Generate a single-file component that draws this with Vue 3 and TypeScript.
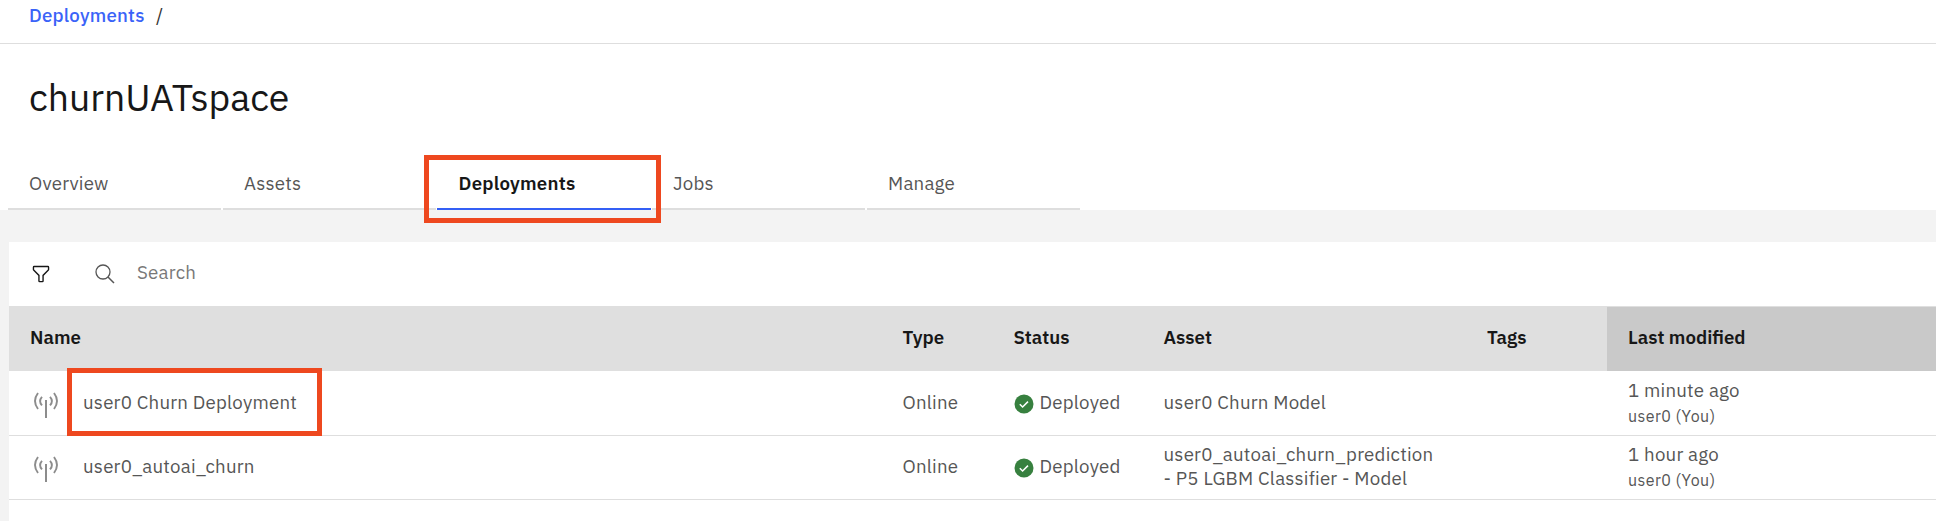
<script setup lang="ts">
interface Tab {
  id: string
  label: string
  active?: boolean
}

interface Deployment {
  id: number
  name: string
  type: string
  status: string
  asset: string[]
  modified: string
  author: string
  highlighted?: boolean
}

const tabs: Tab[] = [
  { id: 'overview', label: 'Overview' },
  { id: 'assets', label: 'Assets' },
  { id: 'deployments', label: 'Deployments', active: true },
  { id: 'jobs', label: 'Jobs' },
  { id: 'manage', label: 'Manage' },
]

const columns: string[] = ['Name', 'Type', 'Status', 'Asset', 'Tags', 'Last modified']

const deployments: Deployment[] = [
  {
    id: 1,
    name: 'user0 Churn Deployment',
    type: 'Online',
    status: 'Deployed',
    asset: ['user0 Churn Model'],
    modified: '1 minute ago',
    author: 'user0 (You)',
    highlighted: true,
  },
  {
    id: 2,
    name: 'user0_autoai_churn',
    type: 'Online',
    status: 'Deployed',
    asset: ['user0_autoai_churn_prediction', '- P5 LGBM Classifier - Model'],
    modified: '1 hour ago',
    author: 'user0 (You)',
  },
]
</script>

<template>
  <div class="page">
    <nav class="breadcrumb">
      <a class="crumb">Deployments</a>
      <span class="slash">/</span>
    </nav>

    <header class="header">
      <h1>churnUATspace</h1>
      <ul class="tabs">
        <li v-for="tab in tabs" :key="tab.id" class="tab" :class="[tab.id, { active: tab.active }]">
          <span>{{ tab.label }}</span>
          <i v-if="tab.active" class="marker tab-marker"></i>
        </li>
      </ul>
    </header>

    <main class="panel">
      <div class="toolbar">
        <svg class="filter" width="22" height="22" viewBox="0 0 32 32">
          <path
            fill="currentColor"
            d="M18 28h-4a2 2 0 0 1-2-2v-7.59L4.59 11A2 2 0 0 1 4 9.59V6a2 2 0 0 1 2-2h20a2 2 0 0 1 2 2v3.59a2 2 0 0 1-.59 1.41L20 18.41V26a2 2 0 0 1-2 2ZM6 6v3.59l8 8V26h4v-8.41l8-8V6Z"
          />
        </svg>
        <svg class="magnifier" width="20" height="20" viewBox="0 0 20 20" fill="none" stroke="currentColor">
          <circle cx="8" cy="8" r="7" stroke-width="1.3" />
          <path d="M13 13l6 6" stroke-width="1.5" />
        </svg>
        <span class="search">Search</span>
      </div>

      <div class="row head">
        <div v-for="column in columns" :key="column" class="cell" :class="{ sorted: column === 'Last modified' }">
          <span>{{ column }}</span>
        </div>
      </div>

      <div v-for="item in deployments" :key="item.id" class="row">
        <div class="cell name">
          <svg class="antenna" width="26" height="28" viewBox="0 0 26 28" fill="none" stroke="currentColor">
            <path d="M13 9v18" stroke-width="2" />
            <path d="M5 2Q-1 10 5 18M21 2Q27 10 21 18" stroke-width="1.9" />
            <path d="M9 5.8Q5.2 10 9 14.4M17 5.8Q20.8 10 17 14.4" stroke-width="1.9" />
          </svg>
          <span>{{ item.name }}</span>
          <i v-if="item.highlighted" class="marker name-marker"></i>
        </div>
        <div class="cell type">{{ item.type }}</div>
        <div class="cell status">
          <svg class="check" width="20" height="20" viewBox="0 0 20 20">
            <circle cx="10" cy="10" r="9.5" fill="#37803f" />
            <path d="M5.8 10.2l2.8 2.8 5.4-5.4" fill="none" stroke="#fff" stroke-width="1.5" />
          </svg>
          <span>{{ item.status }}</span>
        </div>
        <div class="cell asset">
          <span v-for="line in item.asset" :key="line">{{ line }}</span>
        </div>
        <div class="cell"></div>
        <div class="cell modified">
          <span class="time">{{ item.modified }}</span>
          <span class="author">{{ item.author }}</span>
        </div>
      </div>
    </main>
  </div>
</template>

<style>
body {
  margin: 0;
  overflow: hidden;
}
</style>

<style scoped>
.page {
  box-sizing: border-box;
  height: 521px;
  overflow: hidden;
  background: #f3f3f3;
  color: #565656;
  font: 18.7px/24px 'IBM Plex Sans', 'Noto Sans', sans-serif;
  letter-spacing: 0.214px;
  white-space: nowrap;
}

.breadcrumb {
  display: flex;
  box-sizing: border-box;
  height: 44px;
  padding-left: 29px;
  border-bottom: 1px solid #dedede;
  background: #fff;
  line-height: 30px;
}

.crumb {
  width: 127px;
  color: #3a63f8;
  font-weight: 500;
}

.slash {
  color: #333;
}

.header {
  display: flex;
  flex-direction: column;
  justify-content: space-between;
  height: 166px;
  background: #fff;
}

h1 {
  margin: 28px 0 0 29px;
  color: #171717;
  font-size: 37.4px;
  font-weight: 400;
  line-height: 50px;
  letter-spacing: 0;
}

.tabs {
  display: flex;
  gap: 2px;
  margin: 0;
  padding: 0 0 0 8px;
  list-style: none;
}

.tab {
  position: relative;
  box-sizing: border-box;
  width: 213px;
  height: 51px;
  padding: 12px 0 0 21px;
  border-bottom: 2px solid #dedede;
}

.tab.active {
  width: 214px;
  margin-left: -1px;
  padding-left: 21.6px;
  border-color: #345ff5;
  color: #171717;
  font-weight: 600;
}

.tab.jobs {
  margin-left: -1px;
}

.marker {
  position: absolute;
  box-sizing: border-box;
  border: 5px solid #ee481f;
}

.tab-marker {
  top: -4px;
  left: -13px;
  width: 237px;
  height: 68px;
  z-index: 1;
}

.panel {
  height: 279px;
  margin: 32px 0 0 9px;
  background: #fff;
}

.toolbar {
  display: flex;
  align-items: center;
  height: 64px;
}

.filter {
  margin-left: 21px;
  color: #171717;
}

.magnifier {
  margin-left: 43px;
  color: #565656;
}

.search {
  margin: -4px 0 0 22px;
  color: #787878;
}

.row {
  display: grid;
  grid-template-columns: 872.5px 111px 150px 323.5px 141px 1fr;
  box-sizing: border-box;
  height: 64px;
  border-top: 1px solid #dedede;
}

.head {
  height: 65px;
  border: 0;
  background: #dfdfdf;
  color: #171717;
  font-weight: 600;
  letter-spacing: 0;
}

.head + .row {
  border-top-color: transparent;
}

.row:last-child {
  height: 65px;
  border-bottom: 1px solid #dedede;
}

.cell {
  position: relative;
  display: flex;
  align-items: center;
  padding: 0 0 3px 21px;
}

.sorted {
  margin-top: 1px;
  padding-bottom: 4px;
  background: #c9c9c9;
}

.name {
  padding-left: 24px;
}

.name span {
  margin-left: 24px;
}

.antenna {
  margin-top: 6px;
  color: #8c8c8c;
}

.name-marker {
  top: -4px;
  left: 58px;
  width: 255px;
  height: 68px;
}

.check {
  margin: 3px 6px 0 0;
}

.asset,
.modified {
  flex-direction: column;
  align-items: flex-start;
  justify-content: center;
}

.modified {
  justify-content: flex-start;
  padding-top: 6px;
  padding-bottom: 0;
}

.author {
  font-size: 16px;
  line-height: 28px;
  letter-spacing: 0.43px;
}
</style>
